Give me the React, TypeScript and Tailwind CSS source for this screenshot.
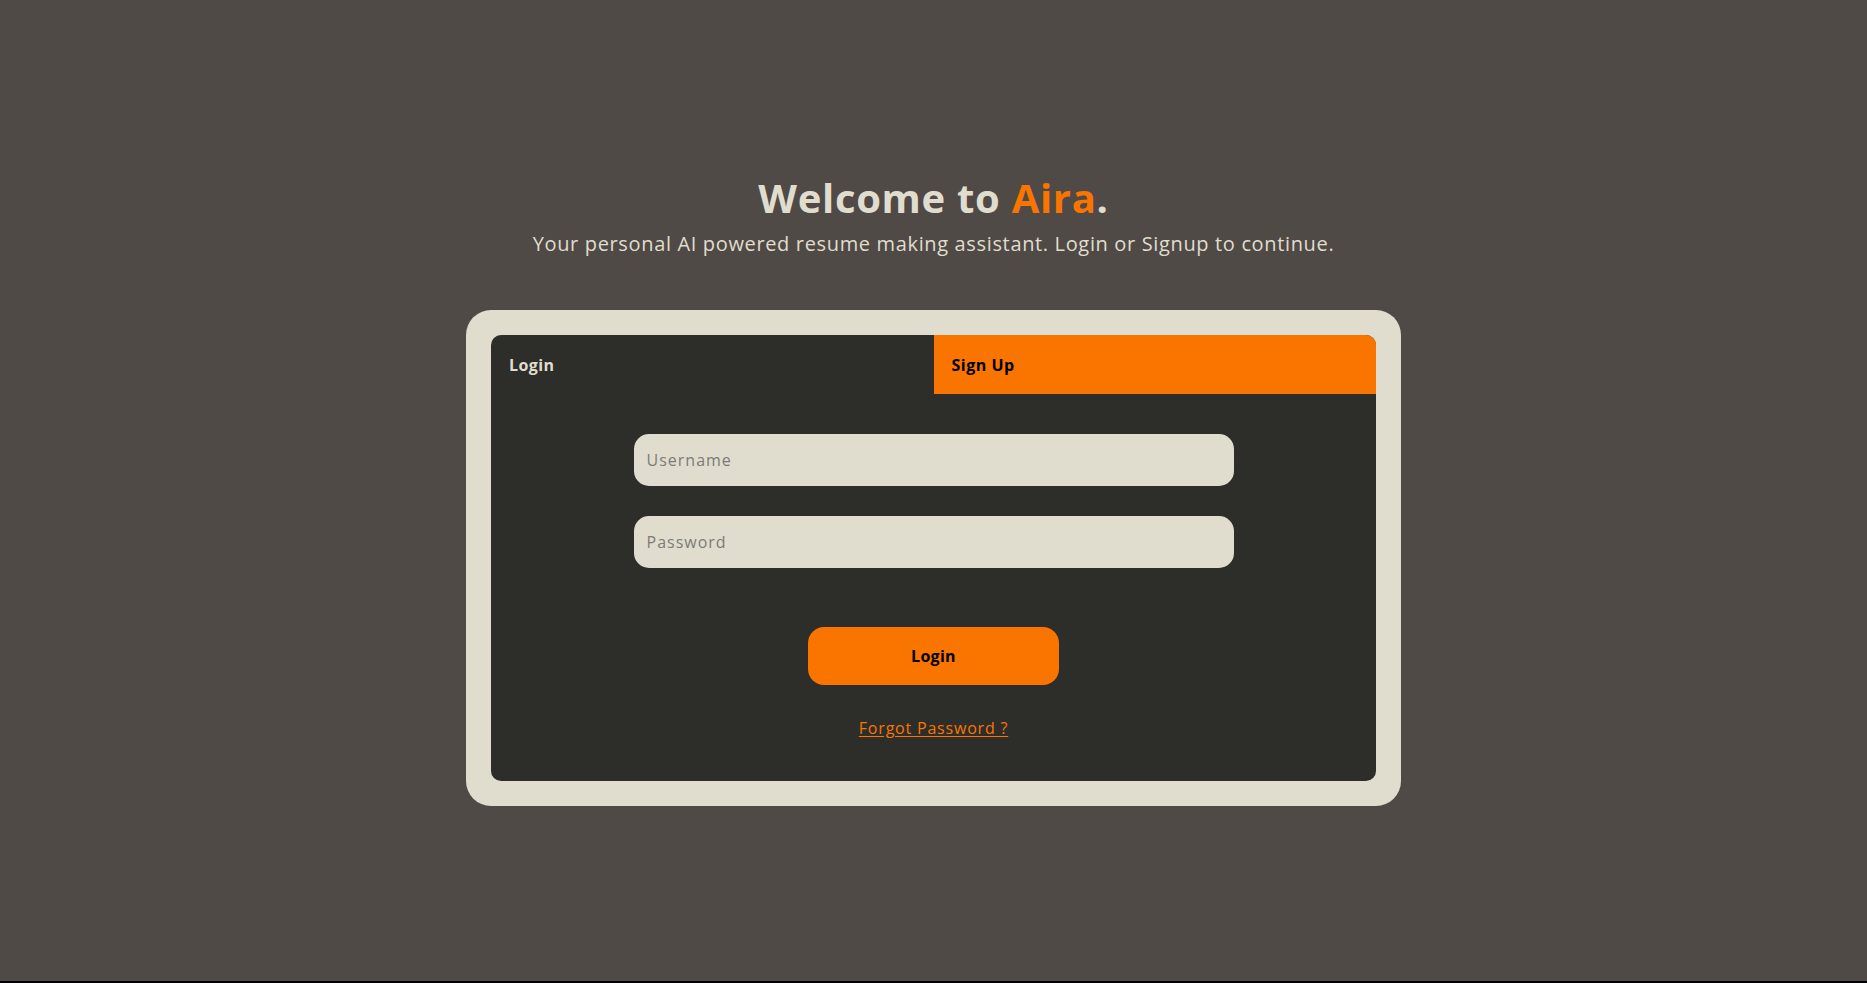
import React from "react";

export default function App() {
  const font = { fontFamily: "'Open Sans', 'Noto Sans', sans-serif" };
  return (
    <div className="min-h-screen bg-black" style={font}>
      <div className="h-[981px] bg-[#4f4a45] flex flex-col items-center pt-[172px]">
        <h1 className="text-[40px] leading-[52px] font-bold text-[#e0ddcf] tracking-[0.7px]">
          Welcome to <span className="text-[#fa7500]">Aira</span>.
        </h1>
        <p className="text-[20px] leading-[28px] text-[#e0ddcf] mt-[6px] tracking-[0.65px]">
          Your personal AI powered resume making assistant. Login or Signup to continue.
        </p>
        <div className="mt-[52px] w-[935px] bg-[#e0ddcf] rounded-[25px] p-[25px]">
          <div className="bg-[#2d2d29] rounded-[10px] overflow-hidden">
            <div className="flex h-[59px]">
              <button className="flex-1 flex items-center px-[18px] text-[16px] font-bold text-[#e0ddcf] text-left tracking-[0.4px]">
                Login
              </button>
              <button className="flex-1 flex items-center px-[18px] text-[16px] font-bold text-black bg-[#fa7500] text-left tracking-[0.5px]">
                Sign Up
              </button>
            </div>
            <div className="flex flex-col items-center pt-[40px] pb-[41px]">
              <input
                type="text"
                placeholder="Username"
                className="w-[600px] h-[52px] rounded-[15px] bg-[#e0ddcf] px-[13px] text-[16px] tracking-[1px] text-[#2d2d29] placeholder:text-[#7d7b76] outline-none"
              />
              <input
                type="password"
                placeholder="Password"
                className="mt-[30px] w-[600px] h-[52px] rounded-[15px] bg-[#e0ddcf] px-[13px] text-[16px] tracking-[1px] text-[#2d2d29] placeholder:text-[#7d7b76] outline-none"
              />
              <button className="mt-[59px] w-[251px] h-[58px] rounded-[16px] bg-[#fa7500] text-black text-[16px] font-bold tracking-[0.3px]">
                Login
              </button>
              <a
                href="#"
                className="mt-[31px] text-[16px] leading-[24px] text-[#fa7500] underline underline-offset-2 tracking-[0.8px]"
              >
                Forgot Password ?
              </a>
            </div>
          </div>
        </div>
      </div>
    </div>
  );
}
